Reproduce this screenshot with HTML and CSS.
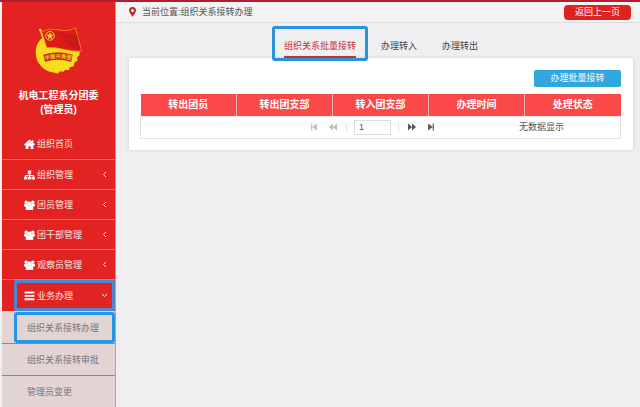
FILE: index.html
```html
<!DOCTYPE html>
<html lang="zh-CN">
<head>
<meta charset="UTF-8">
<meta name="viewport" content="width=device-width, initial-scale=1.0">
<title>组织关系接转办理</title>
<link rel="stylesheet" href="styles.css">
</head>
<body>
    <!-- 图标 -->
    <svg class="symbols" aria-hidden="true">
        <symbol id="home" viewBox="0 0 20 18">
            <path d="M10 1 0 10l1.500 1.500L10 4l8.500 7.500L20 10l-3-2.700V2h-3v2.600z"/>
            <path d="M10 4 3 10.500V18h5v-5h4v5h5v-7.500z"/>
        </symbol>
        <symbol id="sitemap" viewBox="0 0 20 18">
            <path d="M7 1h6v6h-2v2h7v3h2v5h-6v-5h2v-1h-5v1h2v5H7v-5h2v-1H4v1h2v5H0v-5h2V9h7V7H7z"/>
        </symbol>
        <symbol id="users" viewBox="0 0 20 18">
            <circle cx="4" cy="4" r="3"/>
            <circle cx="16" cy="4" r="3"/>
            <circle cx="10" cy="6.500" r="4"/>
            <path d="M0 7h6l2 4-3 1H1Q0 11 0 7zM20 7h-6l-2 4 3 1h4q1-1 1-5z"/>
            <path d="M3 17q0-7 4-7h6q4 0 4 7l-2 1H5z"/>
        </symbol>
        <symbol id="bars" viewBox="0 0 20 18">
            <path d="M1 1h18v3.500H1zM1 7h18v3.500H1zM1 13h18v3.500H1z"/>
        </symbol>
        <symbol id="angle" viewBox="0 0 10 14">
            <path d="M8 2 3 7l5 5" fill="none" stroke="currentColor" stroke-width="2"/>
        </symbol>
        <symbol id="first" viewBox="0 0 14 14">
            <path d="M2 1h2v12H2zM12 1v12L4 7z"/>
        </symbol>
        <symbol id="prev" viewBox="0 0 14 14">
            <path d="M7 1v12L0 7zM14 1v12L7 7z"/>
        </symbol>
    </svg>

    <div class="page">
        <!-- 左侧菜单 -->
        <aside class="sidebar">
            <div class="profile">
                <svg class="logo" viewBox="100 78 150 146" role="img" aria-label="团徽">
                    <path d="M126 112Q105 128 105 157q0 25 17 42 14 15 36 18l14 3 6-7 10 2 6-6 11 1 2-9 13-3 1-11 10-6-2-9 7-7 3-26z" fill="#fbdc1c"/>
                    <path d="M123 94q23-10 50-5 28 7 51-6l19 70q-28 2-52-5-29-9-54-5z" fill="#dd1c1a" stroke="#f5a91b" stroke-width="2"/>
                    <path d="m119 90 18 54" stroke="#f8cf22" stroke-width="4"/>
                    <circle cx="119" cy="90" r="4" fill="#f8cf22"/>
                    <path d="M172 91q25 18 57 12l12 48q-38-5-69-60z" fill="#b91416" opacity=".5"/>
                    <circle cx="148" cy="107" r="13" fill="none" stroke="#f8cf22" stroke-width="3"/>
                    <path d="m148 96 3 7 8 1-6 5 2 8-7-4-7 4 2-8-6-5 8-1z" fill="#f8cf22"/>
                    <path d="M128 164q43-15 88 0l-4 21q-41-12-79 0z" fill="#c7251a"/>
                    <path id="band" d="M133 180q39-12 82 0" fill="none"/>
                    <text class="logo-text"><textPath href="#band">中国共青团</textPath></text>
                </svg>
                <div class="org">机电工程系分团委<br>(管理员)</div>
            </div>
            <nav>
                <ul class="menu">
                    <li><a href="#"><svg class="icon"><use href="#home"/></svg>组织首页</a></li>
                    <li><a href="#"><svg class="icon"><use href="#sitemap"/></svg>组织管理<svg class="arrow"><use href="#angle"/></svg></a></li>
                    <li><a href="#"><svg class="icon"><use href="#users"/></svg>团员管理<svg class="arrow"><use href="#angle"/></svg></a></li>
                    <li><a href="#"><svg class="icon"><use href="#users"/></svg>团干部管理<svg class="arrow"><use href="#angle"/></svg></a></li>
                    <li><a href="#"><svg class="icon"><use href="#users"/></svg>观察员管理<svg class="arrow"><use href="#angle"/></svg></a></li>
                    <li class="open"><a href="#"><svg class="icon"><use href="#bars"/></svg>业务办理<svg class="arrow"><use href="#angle"/></svg></a></li>
                </ul>
                <ul class="submenu">
                    <li class="current"><a href="#">组织关系接转办理</a></li>
                    <li><a href="#">组织关系接转审批</a></li>
                    <li><a href="#">管理员变更</a></li>
                </ul>
            </nav>
        </aside>

        <!-- 主要内容 -->
        <main class="main">
            <header class="topbar">
                <svg class="pin" viewBox="0 0 14 20"><path fill-rule="evenodd" d="M7 0a7 7 0 0 1 7 7c0 4-5 9-7 13C5 16 0 11 0 7a7 7 0 0 1 7-7zm0 4a3 3 0 1 0 0 6 3 3 0 0 0 0-6z"/></svg>
                <span>当前位置:组织关系接转办理</span>
                <button type="button" class="back">返回上一页</button>
            </header>

            <nav class="tabs">
                <a href="#" class="tab active">组织关系批量接转</a>
                <a href="#" class="tab">办理转入</a>
                <a href="#" class="tab">办理转出</a>
            </nav>

            <section class="panel">
                <button type="button" class="batch">办理批量接转</button>
                <table class="grid">
                    <thead>
                        <tr>
                            <th>转出团员</th>
                            <th>转出团支部</th>
                            <th>转入团支部</th>
                            <th>办理时间</th>
                            <th>处理状态</th>
                        </tr>
                    </thead>
                    <tbody>
                        <tr>
                            <td colspan="5">
                                <div class="pager">
                                    <button type="button" aria-label="首页" disabled><svg><use href="#first"/></svg></button>
                                    <button type="button" aria-label="上一页" disabled><svg><use href="#prev"/></svg></button>
                                    <span class="sep"></span>
                                    <input type="text" value="1" aria-label="页码">
                                    <span class="sep"></span>
                                    <button type="button" class="next" aria-label="下一页"><svg><use href="#prev"/></svg></button>
                                    <button type="button" class="next" aria-label="尾页"><svg><use href="#first"/></svg></button>
                                    <span class="empty">无数据显示</span>
                                </div>
                            </td>
                        </tr>
                    </tbody>
                </table>
            </section>
        </main>
    </div>
</body>
</html>
```
FILE: styles.css
```css
* {
    box-sizing: border-box;
}

body {
    margin: 0;
    border-top: 2px solid #b01e33;
    background: #efeff1;
    color: #555;
    font-family: "Liberation Sans", "Noto Sans CJK SC", sans-serif;
    font-size: 9px;
    line-height: 14px;
}

a {
    color: inherit;
    text-decoration: none;
}

button,
input {
    font: inherit;
}

ul {
    margin: 0;
    padding: 0;
    list-style: none;
}

svg {
    fill: currentColor;
}

.symbols {
    display: none;
}

.page {
    display: flex;
    min-height: calc(100vh - 2px);
    padding-left: 2px;
}

/* 左侧菜单 */
.sidebar {
    flex: 0 0 114px;
    border-right: 1px solid #ee8a86;
    background: #e32322;
    color: #fbe3e0;
}

.profile {
    display: flex;
    flex-direction: column;
    align-items: center;
    gap: 14px;
    padding: 24px 0 12px;
}

.logo {
    width: 50px;
    height: 49px;
}

.logo-text {
    fill: #f8cf22;
    font-size: 16px;
    font-weight: bold;
}

.org {
    color: #fff;
    font-size: 10px;
    font-weight: bold;
    text-align: center;
}

.menu a {
    display: flex;
    align-items: center;
    gap: 2px;
    height: 30px;
    padding: 0 8px 0 22px;
}

.menu li + li {
    border-top: 1px solid #ee6c69;
}

.menu li + li a {
    height: 29px;
}

.icon {
    width: 11px;
    height: 10px;
    color: #fff;
}

.arrow {
    width: 5px;
    height: 7px;
    margin-left: auto;
}

.menu .open a {
    height: 31px;
    margin-left: 12px;
    padding: 0 5px 0 7px;
    border: 3px solid #4a86d2;
    border-radius: 2px;
}

.open .arrow {
    transform: rotate(-90deg);
}

.submenu {
    padding-top: 1px;
    background: #e3d4d4;
    color: #777;
}

.submenu a {
    display: flex;
    align-items: center;
    height: 31px;
    padding-left: 25px;
}

.submenu li + li {
    border-top: 1px solid #d9666b;
}

.submenu .current a {
    margin-left: 12px;
    padding-left: 10px;
    border: 3px solid #2296e9;
    border-radius: 3px;
}

/* 主要内容 */
.main {
    flex: 1;
    min-width: 0;
}

.topbar {
    display: flex;
    align-items: center;
    gap: 6px;
    height: 21px;
    padding: 0 9px 0 13px;
    border-bottom: 1px solid #dcdcde;
    background: #f3f3f4;
}

.pin {
    width: 7px;
    height: 10px;
    color: #c0282f;
}

.back {
    width: 67px;
    height: 15px;
    margin-left: auto;
    padding: 0;
    border: 0;
    border-radius: 4px;
    background: #dd2222;
    color: #fff;
    line-height: 15px;
}

.tabs {
    display: flex;
    justify-content: center;
    gap: 25px;
    margin: 0 7px 0 13px;
    padding-top: 13px;
}

.tab {
    position: relative;
    height: 22px;
    padding-top: 3px;
    color: #444;
}

.tab.active {
    border-bottom: 2px solid #c0343a;
    color: #c0343a;
}

/* 当前标签外框 */
.tab.active::after {
    content: "";
    position: absolute;
    inset: -10px -12px -5px;
    border: 3px solid #2b93dc;
    border-radius: 3px;
}

.panel {
    margin: 0 7px 0 13px;
    padding: 12px 12px 11px 11px;
    background: #fff;
    box-shadow: 0 0 3px #c8c8cc;
}

.batch {
    display: block;
    width: 87px;
    height: 17px;
    margin: 0 0 7px auto;
    padding: 0;
    border: 0;
    border-radius: 2px;
    background: #32a6de;
    color: #fff;
    line-height: 17px;
}

.grid {
    width: 100%;
    border-collapse: collapse;
    table-layout: fixed;
}

.grid th {
    height: 22px;
    padding: 0;
    border: 0 solid #ffb5b3;
    background: #fb4848;
    color: #fff;
    font-size: 10px;
}

.grid th + th {
    border-left-width: 1px;
}

.grid td {
    padding: 0;
    border: 1px solid #e4e4e6;
}

.pager {
    display: flex;
    align-items: center;
    justify-content: flex-end;
    gap: 7px;
    height: 21px;
    padding-right: 56px;
}

.pager button {
    display: flex;
    padding: 2px;
    border: 0;
    background: none;
    color: #555;
}

.pager button:disabled {
    color: #bbb;
}

.pager svg {
    width: 8px;
    height: 8px;
}

.pager .next svg {
    transform: scaleX(-1);
}

.pager input {
    width: 37px;
    height: 15px;
    padding: 0 4px;
    border: 1px solid #ddd;
    color: #555;
}

.sep {
    width: 1px;
    height: 9px;
    background: #e4e4e6;
}

.empty {
    margin-left: 75px;
}
```
